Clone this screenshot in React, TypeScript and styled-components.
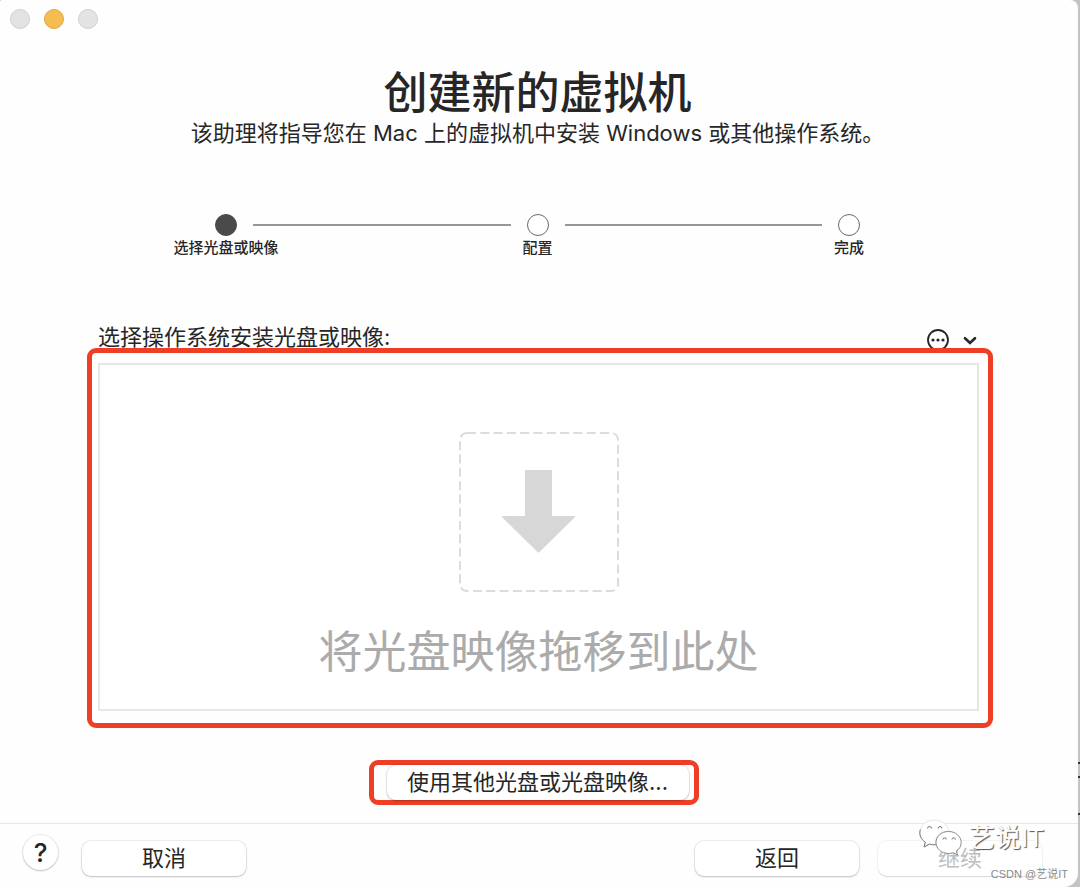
import React from "react";
import styled, { createGlobalStyle } from "styled-components";

const ink = "#262626";
const highlight = "#ee3f26";

const GlobalStyle = createGlobalStyle`
  * { box-sizing: border-box; }
  body {
    margin: 0;
    background: #c3c3c3;
    color: ${ink};
    font-family: Inter, "Noto Sans CJK SC", sans-serif;
    font-size: 22px;
    line-height: 30px;
  }
  h1, h2, p, ol { margin: 0; padding: 0; font-weight: 400; }
  button { font: inherit; color: inherit; padding: 0; border: 0; background: none; }
`;

const Desktop = styled.div`
  position: relative;
  min-height: 100vh;
  display: flex;
  padding-right: 2px;
`;

const Window = styled.main`
  flex: 1;
  min-width: 0;
  display: flex;
  flex-direction: column;
  background: #fefefe;
  border-radius: 2px 8px 14px 0;
`;

const TitleBar = styled.div`
  display: flex;
  gap: 14px;
  padding: 9px 10px;
`;

const WindowButton = styled.button<{ $active?: boolean }>`
  width: 20px;
  height: 20px;
  border-radius: 50%;
  background: ${(p) => (p.$active ? "#f5bd4f" : "#e3e3e3")};
  border: 1px solid ${(p) => (p.$active ? "#dfa844" : "#cfcfcf")};
`;

const Intro = styled.header`
  padding: 30px 3px 0 0;
  text-align: center;
`;

const Title = styled.h1`
  font-size: 44px;
  line-height: 50px;
  font-weight: 500;
`;

const Steps = styled.ol`
  display: flex;
  width: 60%;
  margin: 66px auto 0;
  list-style: none;
`;

const Step = styled.li<{ $last?: boolean }>`
  display: flex;
  align-items: flex-start;
  flex: ${(p) => (p.$last ? "none" : "1")};

  &:not(:last-child)::after {
    content: "";
    flex: 1;
    height: 2px;
    margin: 10px 16px 0;
    background: #979797;
  }
`;

const StepMark = styled.div`
  width: 22px;
  display: flex;
  flex-direction: column;
  align-items: center;
  gap: 2px;
`;

const Dot = styled.span<{ $current?: boolean }>`
  width: 22px;
  height: 22px;
  border-radius: 50%;
  border: 1px solid ${(p) => (p.$current ? "#4a4a4a" : "#6a6a6a")};
  background: ${(p) => (p.$current ? "#4a4a4a" : "#fff")};
`;

const StepLabel = styled.span`
  font-size: 15px;
  line-height: 20px;
  font-weight: 500;
  white-space: nowrap;
`;

const Picker = styled.section`
  flex: 1;
  display: flex;
  flex-direction: column;
  padding: 64px 99px 18px 98px;
`;

const PickerHead = styled.div`
  display: flex;
  justify-content: space-between;
  align-items: center;
  margin-bottom: 11px;
`;

const PickerTitle = styled.h2`
  font-size: 22px;
  line-height: 30px;
`;

const MenuButton = styled.button`
  display: flex;
  align-items: center;
  gap: 14px;
  height: 24px;
  margin: 6px 2px 0 0;
`;

const DropZone = styled.div`
  position: relative;
  flex: 1;
  display: flex;
  flex-direction: column;
  align-items: center;
  gap: 30px;
  padding: 67px 0 27px;
  border: 2px solid #e6e6e6;
  background: #fff;
`;

const DropText = styled.p`
  font-size: 44px;
  line-height: 60px;
  color: #ababab;
`;

const ZoneHighlight = styled.div`
  position: absolute;
  inset: -17px -16px -19px -13px;
  border: 5px solid ${highlight};
  border-radius: 9px;
  pointer-events: none;
`;

const BrowseFrame = styled.div`
  align-self: center;
  width: 330px;
  margin-top: 49px;
  margin-right: 10px;
  padding: 0 5px 0 13px;
  border: 5px solid ${highlight};
  border-radius: 9px;
`;

const PushButton = styled.button<{ $wide?: boolean }>`
  width: ${(p) => (p.$wide ? "100%" : "164px")};
  height: 35px;
  padding-bottom: 2px;
  border-radius: 9px;
  background: #fff;
  box-shadow: 0 0 1px 1px rgba(0, 0, 0, 0.07), 0 1px 2px rgba(0, 0, 0, 0.2);

  &:disabled {
    color: #bdbdbd;
    box-shadow: 0 0 1px 1px rgba(0, 0, 0, 0.05), 0 1px 1px rgba(0, 0, 0, 0.1);
  }
`;

const Footer = styled.footer`
  position: relative;
  display: flex;
  align-items: flex-end;
  padding: 11px 36px 11px 23px;
  border-top: 1px solid #e7e7e7;
`;

const HelpButton = styled.button`
  align-self: flex-start;
  width: 35px;
  height: 35px;
  margin-right: 24px;
  margin-bottom: 6px;
  border-radius: 50%;
  background: #fff;
  font-size: 26px;
  font-weight: 500;
  line-height: 35px;
  box-shadow: 0 0 1px 1px rgba(0, 0, 0, 0.07), 0 1px 2px rgba(0, 0, 0, 0.2);
`;

const Navigation = styled.div`
  display: flex;
  gap: 19px;
  margin-left: auto;
`;

const Brand = styled.div`
  position: absolute;
  right: 34px;
  top: -6px;
  display: flex;
  align-items: center;
  gap: 6px;
  font-family: "Liberation Sans", "Noto Sans CJK SC", sans-serif;
  font-size: 26px;
  line-height: 40px;
  color: #fff;
  text-shadow: 1px 1px 1px #555;
  pointer-events: none;
`;

const Credit = styled.small`
  position: absolute;
  right: 10px;
  bottom: 4px;
  font-family: "Liberation Sans", "Noto Sans CJK SC", sans-serif;
  font-size: 11px;
  line-height: 18px;
  color: #8a8a8a;
  pointer-events: none;
`;

const EdgeMarks = styled.svg`
  position: absolute;
  right: 0;
  bottom: 67px;
`;

const steps = ["选择光盘或映像", "配置", "完成"];

const MoreIcon = () => (
  <svg width="22" height="24" viewBox="0 0 22 24" fill="none" stroke={ink} strokeWidth="1.8" aria-hidden="true">
    <circle cx="11" cy="12" r="10" />
    <g fill={ink} stroke="none">
      <circle cx="6" cy="12" r="1.6" />
      <circle cx="11" cy="12" r="1.6" />
      <circle cx="16" cy="12" r="1.6" />
    </g>
  </svg>
);

const ChevronIcon = () => (
  <svg width="14" height="24" viewBox="0 0 14 24" fill="none" stroke={ink} strokeWidth="2.6" aria-hidden="true">
    <path d="M2 10.2l5 4.8 5-4.8" strokeLinecap="round" strokeLinejoin="miter" />
  </svg>
);

const DropIcon = () => (
  <svg width="160" height="160" viewBox="0 0 160 160" aria-hidden="true">
    <rect x="1" y="1" width="158" height="158" rx="7" fill="none" stroke="#dcdcdc" strokeWidth="2" strokeDasharray="9 4.3" />
    <path d="M66 38h27v46h22q2 0 .6 1.6L80.5 120q-1 1-2 0L43.4 85.6Q42 84 44 84h22z" fill="#d7d7d7" />
  </svg>
);

const ChatIcon = () => (
  <svg width="44" height="38" viewBox="0 0 44 38" fill="#fff" aria-hidden="true">
    <path
      d="M15.500 1C7.500 1 1 6.500 1 13.500c0 4 2 7.300 5.300 9.600L5 28l5.500-2.900c2 .6 4 .8 6.300.7C15 18 21 12 30 12 28.500 5.500 22.500 1 15.500 1z"
      stroke="#e4e4e4"
    />
    <path d="M1.300 10.500C-.3 16 2 20.500 6.300 23.100L5 28l5.500-2.900c2 .6 4 .8 6.300.7" fill="none" stroke="#777" />
    <path
      d="M29.500 12.500C22.500 12.500 17 17.300 17 23.500S22.500 34.500 29.500 34.500c1.700 0 3.200-.3 4.700-.8l4.300 2.300-1.200-3.900c3.100-2 4.900-5 4.900-8.600 0-6.200-5.700-11-12.700-11z"
      stroke="#8b8b8b"
    />
    <path
      d="M8.500 9.500a2 2 0 0 1 4 0M19 9.500a2 2 0 0 1 4 0M24 20.500a1.700 1.700 0 0 1 3.400 0M33 20.500a1.700 1.700 0 0 1 3.400 0"
      fill="none"
      stroke="#777"
    />
  </svg>
);

export default function App() {
  return (
    <Desktop>
      <GlobalStyle />
      <Window>
        <TitleBar>
          <WindowButton aria-label="关闭" />
          <WindowButton aria-label="最小化" $active />
          <WindowButton aria-label="缩放" />
        </TitleBar>
        <Intro>
          <Title>创建新的虚拟机</Title>
          <p>该助理将指导您在 Mac 上的虚拟机中安装 Windows 或其他操作系统。</p>
          <Steps>
            {steps.map((label, i) => (
              <Step key={label} $last={i === steps.length - 1}>
                <StepMark>
                  <Dot $current={i === 0} />
                  <StepLabel>{label}</StepLabel>
                </StepMark>
              </Step>
            ))}
          </Steps>
        </Intro>
        <Picker>
          <PickerHead>
            <PickerTitle>选择操作系统安装光盘或映像:</PickerTitle>
            <MenuButton aria-label="更多选项">
              <MoreIcon />
              <ChevronIcon />
            </MenuButton>
          </PickerHead>
          <DropZone>
            <DropIcon />
            <DropText>将光盘映像拖移到此处</DropText>
            <ZoneHighlight />
          </DropZone>
          <BrowseFrame>
            <PushButton $wide>使用其他光盘或光盘映像...</PushButton>
          </BrowseFrame>
        </Picker>
        <Footer>
          <HelpButton aria-label="帮助">?</HelpButton>
          <PushButton>取消</PushButton>
          <Navigation>
            <PushButton>返回</PushButton>
            <PushButton disabled>继续</PushButton>
          </Navigation>
          <Brand>
            <ChatIcon />
            <span>艺说IT</span>
          </Brand>
          <Credit>CSDN @艺说IT</Credit>
        </Footer>
      </Window>
      <EdgeMarks width="2" height="60" viewBox="0 0 2 60" fill="#333" aria-hidden="true">
        <path d="M0 2h2v2H0zM0 16h2v2H0zM0 53h2v2H0z" />
      </EdgeMarks>
    </Desktop>
  );
}
